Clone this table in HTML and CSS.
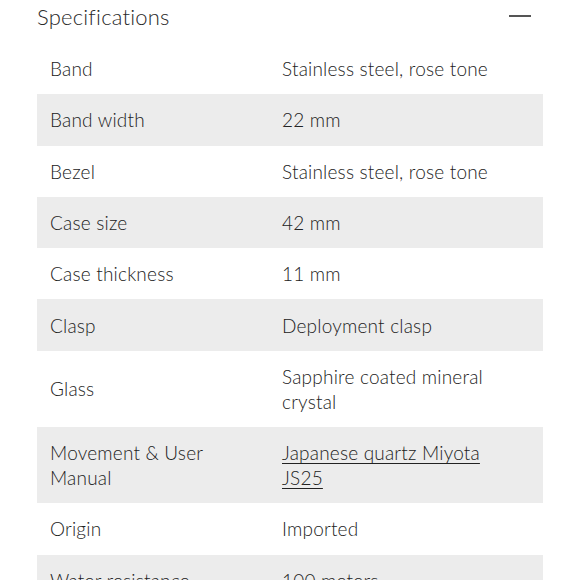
FILE: index.html
```html
<!DOCTYPE html>
<html>
<head>
<meta charset="utf-8">
<link rel="stylesheet" href="styles.css">
</head>
<body>
<section class="specs">
  <div class="specs-head">
    <h2 class="specs-title">Specifications</h2>
    <span class="specs-toggle" aria-hidden="true"></span>
  </div>
  <div class="specs-table">
    <div class="row"><div class="key">Band</div><div class="val">Stainless steel, rose tone</div></div>
    <div class="row alt"><div class="key">Band width</div><div class="val">22 mm</div></div>
    <div class="row"><div class="key">Bezel</div><div class="val">Stainless steel, rose tone</div></div>
    <div class="row alt"><div class="key">Case size</div><div class="val">42 mm</div></div>
    <div class="row"><div class="key">Case thickness</div><div class="val">11 mm</div></div>
    <div class="row alt"><div class="key">Clasp</div><div class="val">Deployment clasp</div></div>
    <div class="row"><div class="key">Glass</div><div class="val">Sapphire coated mineral crystal</div></div>
    <div class="row alt"><div class="key">Movement &amp; User Manual</div><div class="val"><a class="link" href="#">Japanese quartz Miyota JS25</a></div></div>
    <div class="row"><div class="key">Origin</div><div class="val">Imported</div></div>
    <div class="row alt"><div class="key">Water resistance</div><div class="val">100 meters</div></div>
  </div>
</section>
</body>
</html>
```

FILE: styles.css
```css
html, body {
  margin: 0;
  padding: 0;
  background: #ffffff;
}
body {
  font-family: Lato, "Open Sans", sans-serif;
  color: #222222;
  overflow: hidden;
}
.specs {
  padding: 0 37px;
}
.specs-head {
  display: flex;
  align-items: center;
  justify-content: space-between;
  height: 43px;
}
.specs-title {
  margin: 0;
  font-weight: 300;
  font-size: 22px;
  line-height: 30px;
  color: #2a2a2a;
  margin-top: -10px;
  letter-spacing: 0.2px;
}
.specs-toggle {
  display: block;
  width: 22px;
  height: 2px;
  background: #555555;
  margin-right: 12px;
  margin-top: -11px;
}
.specs-table {
  display: flex;
  flex-direction: column;
}
.row {
  display: grid;
  grid-template-columns: 232px 1fr;
  align-items: center;
  padding: 13.15px 13px;
  font-size: 19px;
  line-height: 25px;
  font-weight: 300;
  letter-spacing: 0.2px;
}
.row.alt {
  background: #ececec;
}
.key {
  max-width: 200px;
}
.val {
  max-width: 232px;
}
.link {
  color: inherit;
  text-decoration: underline;
  text-underline-offset: 3px;
  text-decoration-thickness: 1px;
}
```
